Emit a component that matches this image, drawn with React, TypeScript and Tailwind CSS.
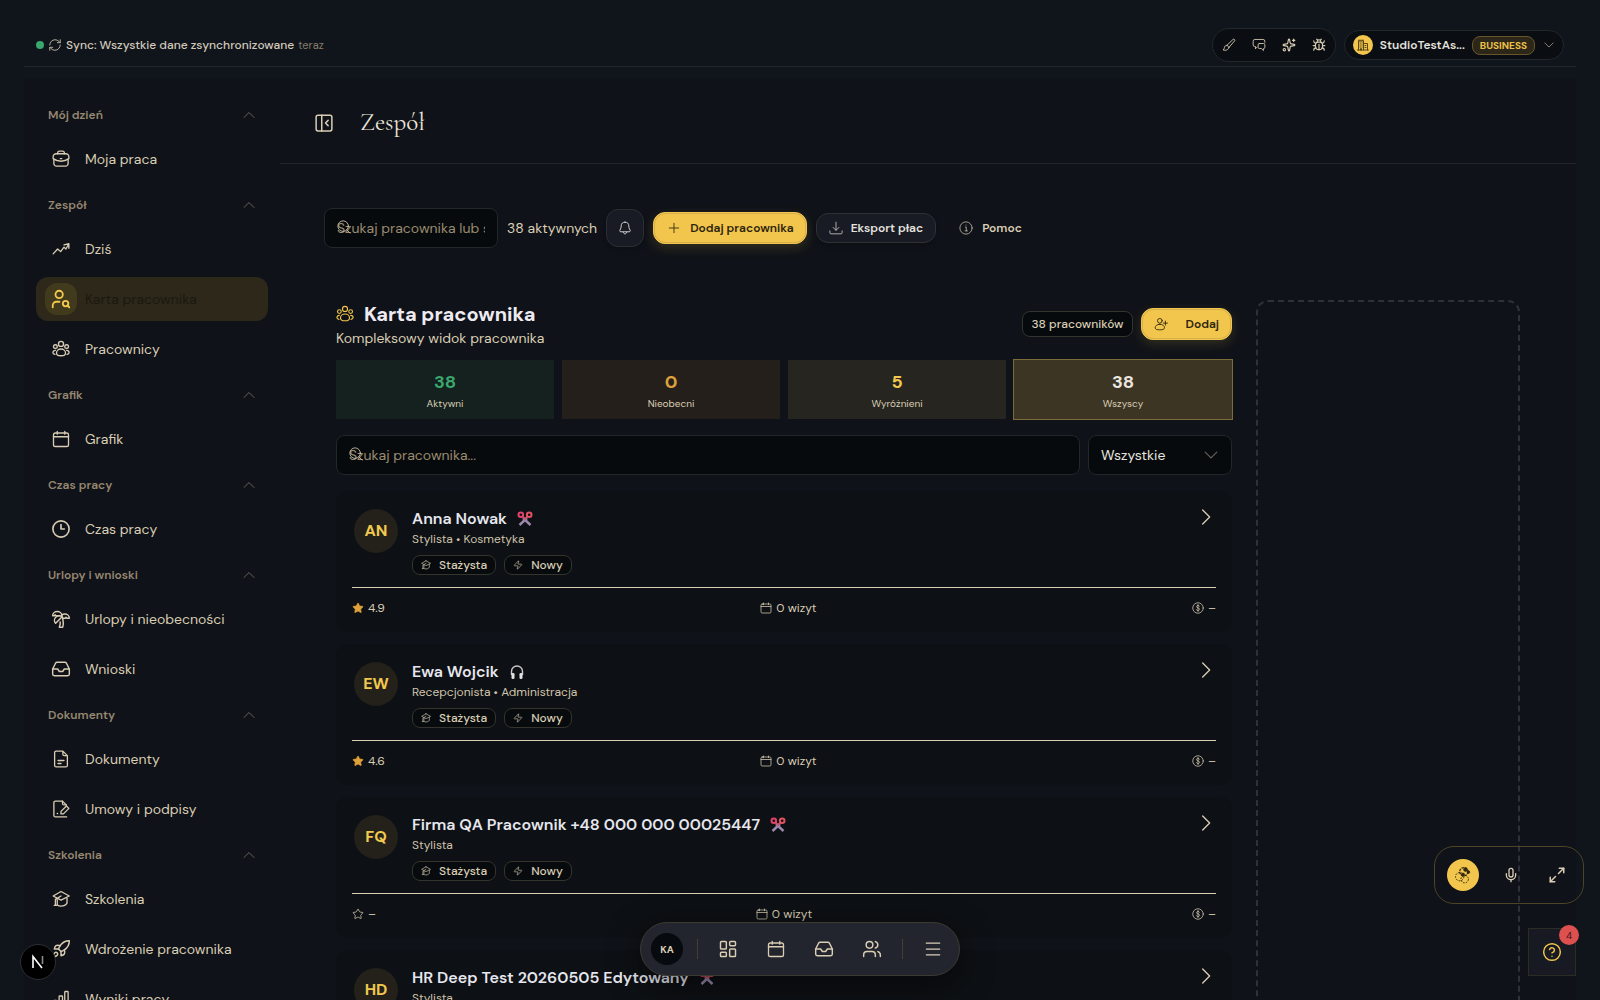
import type { ComponentType, ReactNode } from "react";
import {
  Bug,
  CircleQuestionMark,
  Inbox,
  LayoutDashboard,
  Maximize2,
  Menu,
  Mic,
  Plus,
  RefreshCw,
  Rocket,
  Sparkles,
  Star,
  TreePalm,
  UserSearch,
  Users,
  Zap,
} from "lucide-react";

type IconProps = { className?: string; strokeWidth?: number };
type Icon = ComponentType<IconProps>;

function makeIcon(children: ReactNode): Icon {
  return function LineIcon({ className, strokeWidth = 1.5 }: IconProps) {
    return (
      <svg
        viewBox="0 0 24 24"
        fill="none"
        stroke="currentColor"
        strokeWidth={strokeWidth}
        strokeLinecap="round"
        strokeLinejoin="round"
        className={className}
        aria-hidden="true"
      >
        {children}
      </svg>
    );
  };
}

const ChevronUpIcon = makeIcon(<path d="m2 17 10-10 10 10" />);
const ChevronDownIcon = makeIcon(<path d="m2 7 10 10L22 7" />);
const ChevronRightIcon = makeIcon(<path d="m7 1.500 10.500 10.500L7 22.500" />);

const BriefcaseIcon = makeIcon(
  <>
    <path d="M7.500 5V4A2.500 2.500 0 0 1 10 1.500h4A2.500 2.500 0 0 1 16.500 4v1" />
    <path d="M6 5h12a4 4 0 0 1 4.500 4v2.500c-3 2.300-6.500 3.500-10.500 3.500s-7.500-1.200-10.500-3.500V9A4 4 0 0 1 6 5Z" />
    <path d="M2.500 13v5A3.500 3.500 0 0 0 6 21.500h12a3.500 3.500 0 0 0 3.500-3.500v-5M11 11.500h2" />
  </>,
);

const TrendIcon = makeIcon(<path d="M1.500 18.500 7.500 12l4 3.500 4.500-6 2.500 2.500 3.500-6M16 6.500l6.500-1.500v6" />);

const GroupIcon = makeIcon(
  <>
    <circle cx="12" cy="5.200" r="3.400" />
    <circle cx="4.500" cy="8.800" r="2.500" />
    <circle cx="19.500" cy="8.800" r="2.500" />
    <path d="M12 12c-3.500 0-6 2.400-6 5.200C6 19.800 8.500 21 12 21s6-1.200 6-3.800C18 14.400 15.500 12 12 12Z" />
    <path d="M4.500 13.800c-1.800 0-3.300 1.300-3.300 3 0 1.400 1.200 2.200 2.800 2.400M19.500 13.800c1.800 0 3.300 1.300 3.300 3 0 1.400-1.200 2.200-2.800 2.400" />
  </>,
);

const CalendarIcon = makeIcon(
  <>
    <rect x="2" y="4" width="20" height="18" rx="2.500" />
    <path d="M2 9h20M7 2v3.500M17 2v3.500" />
  </>,
);

const ClockIcon = makeIcon(
  <>
    <circle cx="12" cy="12" r="10.800" strokeWidth="2.200" />
    <path d="M12 6v6h4.500" strokeWidth="2.200" />
  </>,
);

const DocumentIcon = makeIcon(
  <>
    <path d="M14.500 1.500H5.500a2 2 0 0 0-2 2v17a2 2 0 0 0 2 2h13a2 2 0 0 0 2-2V7.500l-6-6v4a2 2 0 0 0 2 2h4" />
    <path d="M8 14h8M8 18h4" />
  </>,
);

const SignatureIcon = makeIcon(
  <>
    <path d="M19 6.500 14 1.500H4.500a2 2 0 0 0-2 2v17a2 2 0 0 0 2 2h15" />
    <path d="M14 1.500v3a2 2 0 0 0 2 2h3M7 18h.5M12 18.500v-3.300L19.300 8l3.200 3.200-7.300 7.300H12Z" />
  </>,
);

const GraduationIcon = makeIcon(
  <path d="M12 2 23 8l-11 5.500L1.500 8 12 2ZM12 8l-7.500 4.500V20M20 10.500v7c-1.500 2.500-4.500 4-8 4-2 0-3.500-.5-5-1.500v-7M3 20.500h3" />,
);

const ChartIcon = makeIcon(
  <>
    <rect x="2" y="14" width="4.500" height="8" rx="1" />
    <rect x="9.500" y="8" width="4.500" height="14" rx="1" />
    <rect x="17" y="2" width="4.500" height="20" rx="1" />
  </>,
);

const BrushIcon = makeIcon(
  <path d="M8.500 12.500 18.800 2.600a1.800 1.800 0 0 1 2.600 2.600L12 16M8.500 12.500 12 16M8.500 12.500c-2.500 0-4 1.500-4.300 3.700-.2 1.800-.9 3-2.200 4.300 4 1.500 9.500 0 10-4.500" />,
);

const ChatIcon = makeIcon(
  <>
    <path d="M6 18v-3.500H4.500a2.500 2.500 0 0 1-2.500-2.500V5.500A3 3 0 0 1 5 2.500h14a3 3 0 0 1 3 3v2" />
    <path d="M12.500 9.500H20a2 2 0 0 1 2 2V16a2 2 0 0 1-2 2h-.5v3.500L16 18h-3.500a2 2 0 0 1-2-2v-4.500a2 2 0 0 1 2-2ZM6 18l2.500-2" />
  </>,
);

const BuildingIcon = makeIcon(
  <path d="M1 22h22M3 22V4h10v18M13 9h8v13M6 8h1M9.500 8h1M6 12h1M9.500 12h1M6 16h1M9.500 16h1M7 22v-3h2v3M16 13h2M16 17h2M3 2.500h10" />,
);

const PanelIcon = makeIcon(
  <>
    <rect x="1.500" y="1.500" width="21" height="21" rx="2.500" />
    <path d="M9 1.500v21M17.500 8.500 14 12l3.500 3.500" />
  </>,
);

const SearchIcon = makeIcon(
  <>
    <circle cx="10.500" cy="10.500" r="9" />
    <path d="m17 17 5.500 5.500" />
  </>,
);

const BellIcon = makeIcon(
  <path d="M12 2a6.500 6.500 0 0 0-6.500 6.500c0 5-2.500 6.500-2.500 8.200 0 1 .7 1.800 1.800 1.800h14.400c1.100 0 1.800-.8 1.800-1.800 0-1.700-2.500-3.200-2.500-8.200A6.500 6.500 0 0 0 12 2ZM9 19c.3 1.700 1.500 3 3 3s2.700-1.300 3-3" />,
);

const DownloadIcon = makeIcon(<path d="M12 2v13.500M7 11l5 5 5-5M1.500 17v3a2 2 0 0 0 2 2h17a2 2 0 0 0 2-2v-3" />);

const InfoIcon = makeIcon(
  <>
    <circle cx="12" cy="12" r="10.500" />
    <path d="M11 10.500h1.500v6M10.500 17h4M12 7v.3" />
  </>,
);

const UserPlusIcon = makeIcon(
  <>
    <circle cx="10" cy="6.500" r="4" />
    <path d="M10 12.500c-5 0-8 2.800-8 6C2 21 5 22 10 22s8-1 8-3.500c0-3.200-3-6-8-6ZM19.500 7v7M16 10.500h7" />
  </>,
);

const DollarIcon = makeIcon(
  <>
    <circle cx="12" cy="12" r="10.500" />
    <path d="M15 8.500c-.5-1-1.500-1.500-3-1.500-1.800 0-3 .8-3 2.300 0 3.400 6.200 1.700 6.200 5.200 0 1.600-1.300 2.500-3.200 2.500-1.700 0-2.800-.6-3.300-1.700M12 5v14" />
  </>,
);

// coloured glyphs shown beside the name, one per role
function ScissorsMark() {
  return (
    <svg viewBox="0 0 16 16" fill="none" className="size-4" aria-hidden="true">
      <path d="m6 7 7.500 7M10 7l-7.500 7" stroke="#9b88ac" strokeWidth="2.400" />
      <path d="m5.500 5.500 2.500 2.500 2.500-2.500" stroke="#c4546c" strokeWidth="1.800" />
      <circle cx="3.800" cy="3.800" r="2.300" stroke="#e0446c" strokeWidth="2" />
      <circle cx="12.200" cy="3.800" r="2.300" stroke="#e25360" strokeWidth="2" />
    </svg>
  );
}

function HeadphonesMark() {
  return (
    <svg viewBox="0 0 16 16" fill="none" className="size-4" aria-hidden="true">
      <path d="M2.500 11V7.500a5.500 5.500 0 0 1 11 0V11" stroke="#c9c9cb" strokeWidth="1.400" />
      <rect x="2.500" y="9" width="3" height="6" rx="1.300" fill="#e4e2e0" />
      <rect x="10.500" y="9" width="3" height="6" rx="1.300" fill="#e4e2e0" />
    </svg>
  );
}

type NavItem = { label: string; icon: Icon; size?: string; active?: boolean };

const navGroups: { title: string; items: NavItem[] }[] = [
  { title: "Mój dzień", items: [{ label: "Moja praca", icon: BriefcaseIcon }] },
  {
    title: "Zespół",
    items: [
      { label: "Dziś", icon: TrendIcon },
      { label: "Karta pracownika", icon: UserSearch, size: "size-[22px]", active: true },
      { label: "Pracownicy", icon: GroupIcon },
    ],
  },
  { title: "Grafik", items: [{ label: "Grafik", icon: CalendarIcon }] },
  { title: "Czas pracy", items: [{ label: "Czas pracy", icon: ClockIcon }] },
  {
    title: "Urlopy i wnioski",
    items: [
      { label: "Urlopy i nieobecności", icon: TreePalm, size: "size-5" },
      { label: "Wnioski", icon: Inbox, size: "size-5" },
    ],
  },
  {
    title: "Dokumenty",
    items: [
      { label: "Dokumenty", icon: DocumentIcon },
      { label: "Umowy i podpisy", icon: SignatureIcon },
    ],
  },
  {
    title: "Szkolenia",
    items: [
      { label: "Szkolenia", icon: GraduationIcon },
      { label: "Wdrożenie pracownika", icon: Rocket, size: "size-5" },
      { label: "Wyniki pracy", icon: ChartIcon },
    ],
  },
];

const stats = [
  { value: "38", label: "Aktywni", box: "bg-[#14211f]", text: "text-[#3aa76d]" },
  { value: "0", label: "Nieobecni", box: "bg-[#241f1b]", text: "text-[#e0a13a]" },
  { value: "5", label: "Wyróżnieni", box: "bg-[#26251f]", text: "text-[#f2c84f]" },
  { value: "38", label: "Wszyscy", box: "bg-[#3d3524] ring-1 ring-[#7d6c38]", text: "text-[#ece8e0]" },
];

const employees = [
  { initials: "AN", name: "Anna Nowak", role: "Stylista • Kosmetyka", rating: "4.9", mark: "scissors" },
  { initials: "EW", name: "Ewa Wojcik", role: "Recepcjonista • Administracja", rating: "4.6", mark: "headphones" },
  { initials: "FQ", name: "Firma QA Pracownik +48 000 000 00025447", role: "Stylista", rating: null, mark: "scissors" },
  { initials: "HD", name: "HR Deep Test 20260505 Edytowany", role: "Stylista", rating: null, mark: "scissors" },
];

function TopBar() {
  return (
    <header className="flex h-[43px] shrink-0 items-center justify-between border-b border-[#22262b] px-3">
      <div className="flex items-center text-xs">
        <span className="size-2 rounded-full bg-[#3aa76d]" />
        <RefreshCw className="ml-1 size-[14px] text-[#c9c0ac]" strokeWidth={1.5} />
        <span className="ml-1 font-medium text-[#d0c9ba]">Sync: Wszystkie dane zsynchronizowane</span>
        <span className="ml-1 text-[11px] text-[#857b6b]">teraz</span>
      </div>
      <div className="flex items-center gap-2">
        <div className="flex h-[34px] items-center gap-[2px] rounded-full border border-[#22272a] bg-[#0a0d11] px-[2px] text-[#d9cdb4]">
          {[
            { label: "Motyw", icon: BrushIcon },
            { label: "Wiadomości", icon: ChatIcon },
            { label: "Nowości", icon: Sparkles },
            { label: "Zgłoś błąd", icon: Bug },
          ].map(({ label, icon: ItemIcon }) => (
            <button key={label} type="button" aria-label={label} className="flex size-7 items-center justify-center">
              <ItemIcon className="size-[14px]" />
            </button>
          ))}
        </div>
        <button
          type="button"
          className="flex h-[30px] items-center gap-[7px] rounded-full border border-[#22272a] bg-[#0a0d11] pr-[9px] pl-2"
        >
          <span className="flex size-5 items-center justify-center rounded-full bg-[#f2c54c] text-[#5a4614]">
            <BuildingIcon className="size-3" strokeWidth={2} />
          </span>
          <span className="text-xs font-semibold text-[#e4e2de]">StudioTestAs...</span>
          <span className="rounded-lg border border-[#65562c] bg-[#2c2718] px-[7px] text-[10px] leading-[17px] font-bold text-[#ecc04a]">
            BUSINESS
          </span>
          <ChevronDownIcon className="ml-[2px] size-[10px] text-[#9c978c]" strokeWidth={2} />
        </button>
      </div>
    </header>
  );
}

function Sidebar() {
  return (
    <aside className="w-64 shrink-0 overflow-hidden px-3 pt-[18px]">
      <nav>
        {navGroups.map((group) => (
          <section key={group.title}>
            <button
              type="button"
              className="mb-1 flex h-9 w-full items-center justify-between px-3 text-xs font-semibold text-[#968770]"
            >
              {group.title}
              <ChevronUpIcon className="mr-px size-3 text-[#66625a]" strokeWidth={2} />
            </button>
            {group.items.map(({ label, icon: ItemIcon, size, active }) => (
              <a
                key={label}
                href="#"
                className={`mb-[6px] flex h-11 items-center gap-2 rounded-xl px-[9px] text-sm ${
                  active ? "bg-[#2d281a] text-[#1b190f]" : "text-[#d9cdb4]"
                }`}
              >
                <span
                  className={`flex size-8 items-center justify-center rounded-xl ${
                    active ? "bg-[#413a1c] text-[#f2c84f]" : ""
                  }`}
                >
                  <ItemIcon className={size ?? "size-[18px]"} strokeWidth={active ? 2 : 1.75} />
                </span>
                {label}
              </a>
            ))}
          </section>
        ))}
      </nav>
    </aside>
  );
}

function Toolbar() {
  return (
    <div className="flex h-10 items-center gap-[9px] text-sm">
      <label className="relative block">
        <span className="sr-only">Szukaj</span>
        <SearchIcon className="absolute top-3 left-[13px] size-[14px] text-[#cfc5b0]" />
        <input
          type="text"
          placeholder="Szukaj pracownika lub stanowiska"
          className="h-10 w-[174px] rounded-lg border border-[#22272a] bg-[#070a0d] px-3 text-sm placeholder:text-[#9a8b70]"
        />
      </label>
      <span className="text-[#d9cdb4]">38 aktywnych</span>
      <button
        type="button"
        aria-label="Powiadomienia"
        className="flex size-[38px] items-center justify-center rounded-xl border border-[#2b2f33] bg-[#191b24] text-[#e4e2de] shadow-md"
      >
        <BellIcon className="size-[14px]" />
      </button>
      <button
        type="button"
        className="flex h-8 items-center gap-2 rounded-xl border border-[#f2c54c] bg-[#f2c54c] px-3 text-xs font-semibold text-[#2c240c] shadow-[inset_0_0_0_1px_#d6b04a,0_4px_12px_rgba(242,197,76,0.16)]"
      >
        <Plus className="size-4" strokeWidth={1.25} />
        Dodaj pracownika
      </button>
      <button
        type="button"
        className="flex h-[30px] items-center gap-2 rounded-xl border border-[#2e3233] bg-[#191b24] px-3 text-xs font-semibold text-[#e4e2de] shadow-md"
      >
        <DownloadIcon className="size-[14px]" strokeWidth={1.25} />
        Eksport płac
      </button>
      <button type="button" className="ml-[14px] flex items-center gap-[9px] text-xs font-semibold text-[#d9cdb4]">
        <InfoIcon className="size-[14px]" strokeWidth={1.25} />
        Pomoc
      </button>
    </div>
  );
}

function EmployeeCard({ employee }: { employee: (typeof employees)[number] }) {
  return (
    <article className="rounded-xl bg-[#0d1014] p-4">
      <div className="flex items-start">
        <span className="m-[2px] flex size-11 shrink-0 items-center justify-center rounded-full bg-[#23211a] text-base font-bold text-[#f2c84f]">
          {employee.initials}
        </span>
        <div className="ml-3 flex-1">
          <div className="flex h-6 items-center gap-[10px]">
            <h3 className="text-base font-semibold text-[#e6e7ee]">{employee.name}</h3>
            {employee.mark === "scissors" ? <ScissorsMark /> : <HeadphonesMark />}
          </div>
          <p className="text-xs text-[#cfc4ab]">{employee.role}</p>
          <div className="mt-2 flex gap-2 text-xs font-medium text-[#d9cdb4]">
            <span className="flex h-5 items-center gap-2 rounded-lg border border-[#33352c] bg-[#080b0e] px-2">
              <GraduationIcon className="size-[10px]" />
              Stażysta
            </span>
            <span className="flex h-5 items-center gap-2 rounded-lg border border-[#33352c] bg-[#080b0e] px-2">
              <Zap className="size-[10px]" strokeWidth={1.5} />
              Nowy
            </span>
          </div>
        </div>
        <ChevronRightIcon className="mt-[2px] mr-[2px] size-4 text-[#d9cdb4]" strokeWidth={2} />
      </div>
      <div className="mt-3 flex items-center justify-between border-t border-[#d9cdb4] pt-3 text-xs text-[#d9cdb4]">
        <span className="flex items-center gap-1">
          <Star
            className={employee.rating ? "size-3 fill-[#e0a13a] text-[#e0a13a]" : "size-3"}
            strokeWidth={1.5}
          />
          {employee.rating ?? "–"}
        </span>
        <span className="flex items-center gap-1">
          <CalendarIcon className="size-3" />0 wizyt
        </span>
        <span className="flex items-center gap-1">
          <DollarIcon className="size-3" />–
        </span>
      </div>
    </article>
  );
}

function EmployeePanel() {
  return (
    <section className="min-w-0 flex-1">
      <div className="flex items-center justify-between">
        <div>
          <h2 className="flex h-7 items-center gap-[10px] text-xl font-bold text-[#eeecf2]">
            <GroupIcon className="size-[18px] text-[#f2c54c]" />
            Karta pracownika
          </h2>
          <p className="text-sm text-[#d9cdb4]">Kompleksowy widok pracownika</p>
        </div>
        <div className="flex items-center gap-2">
          <span className="flex h-[26px] items-center rounded-lg border border-[#33352c] bg-[#070a0d] px-2 text-xs font-medium text-[#d9cdb4]">
            38 pracowników
          </span>
          <button
            type="button"
            className="flex h-8 items-center gap-[18px] rounded-xl border border-[#f2c54c] bg-[#f2c54c] px-3 text-xs font-semibold text-[#2c240c] shadow-[inset_0_0_0_1px_#d6b04a,0_4px_12px_rgba(242,197,76,0.16)]"
          >
            <UserPlusIcon className="size-[14px]" />
            Dodaj
          </button>
        </div>
      </div>

      <div className="mt-3 grid grid-cols-4 gap-2">
        {stats.map((stat) => (
          <button key={stat.label} type="button" className={`flex h-[59px] flex-col items-center pt-2 ${stat.box}`}>
            <span className={`text-lg leading-7 font-bold ${stat.text}`}>{stat.value}</span>
            <span className="text-[10px] leading-4 text-[#d9cdb4]">{stat.label}</span>
          </button>
        ))}
      </div>

      <div className="mt-4 flex gap-2">
        <label className="relative block flex-1">
          <span className="sr-only">Szukaj pracownika</span>
          <SearchIcon className="absolute top-3 left-[13px] size-[14px] text-[#cfc5b0]" />
          <input
            type="text"
            placeholder="Szukaj pracownika..."
            className="h-10 w-full rounded-lg border border-[#22272a] bg-[#070a0d] px-3 text-sm placeholder:text-[#9a8b70]"
          />
        </label>
        <label className="relative block w-36">
          <span className="sr-only">Status</span>
          <select className="h-10 w-full appearance-none rounded-lg border border-[#22272a] bg-[#070a0d] px-3 text-sm text-[#e6e4df]">
            <option>Wszystkie</option>
          </select>
          <ChevronDownIcon className="absolute top-[13px] right-[14px] size-[14px] text-[#66625a]" strokeWidth={2} />
        </label>
      </div>

      <div className="mt-4 flex flex-col gap-3">
        {employees.map((employee) => (
          <EmployeeCard key={employee.initials} employee={employee} />
        ))}
      </div>
    </section>
  );
}

function Dock() {
  return (
    <nav
      aria-label="Skróty"
      className="fixed bottom-6 left-1/2 flex h-[54px] -translate-x-1/2 items-center rounded-full border border-[#3b3a30] bg-[#23252e] pr-2 pl-[10px] text-[#d9cdb4] shadow-[0_8px_32px_rgba(0,0,0,0.5)]"
    >
      <span className="flex size-8 items-center justify-center rounded-full bg-[#070a0f] text-[10px] font-bold">KA</span>
      <span className="mr-3 ml-[14px] h-5 w-px bg-[#413f33]" />
      <div className="flex gap-3">
        {[
          { label: "Pulpit", icon: LayoutDashboard },
          { label: "Kalendarz", icon: CalendarIcon },
          { label: "Skrzynka", icon: Inbox },
          { label: "Klienci", icon: Users },
        ].map(({ label, icon: ItemIcon }) => (
          <a key={label} href="#" aria-label={label} className="flex size-9 items-center justify-center">
            <ItemIcon className={label === "Kalendarz" ? "size-[18px]" : "size-5"} strokeWidth={1.75} />
          </a>
        ))}
      </div>
      <span className="mx-3 h-5 w-px bg-[#413f33]" />
      <button type="button" aria-label="Menu" className="flex size-9 items-center justify-center">
        <Menu className="size-5" strokeWidth={1.5} />
      </button>
    </nav>
  );
}

function Assistant() {
  return (
    <div className="fixed right-4 bottom-24 flex h-[58px] w-[150px] items-center rounded-[20px] border border-[#4c4526] pl-3 text-[#d9cdb4]">
      <button
        type="button"
        aria-label="Asystent"
        className="flex size-8 items-center justify-center rounded-full bg-[#f2c54c] text-[#33290f]"
      >
        <svg viewBox="0 0 24 24" className="size-5" fill="none" stroke="currentColor" aria-hidden="true">
          <circle cx="8" cy="14" r="5" strokeWidth="1.200" strokeDasharray="2 1.500" />
          <circle cx="14" cy="17" r="4.500" strokeWidth="1.200" strokeDasharray="2 1.500" />
          <circle cx="13" cy="8" r="5" strokeWidth="1.500" strokeDasharray="3 1" />
          <circle cx="15" cy="5.500" r="2.200" fill="currentColor" />
          <circle cx="18.500" cy="8.500" r="1.600" fill="currentColor" />
          <circle cx="12" cy="11.500" r="1.800" fill="currentColor" />
        </svg>
      </button>
      <button type="button" aria-label="Mikrofon" className="ml-5 flex size-6 items-center justify-center">
        <Mic className="size-4" strokeWidth={2} />
      </button>
      <button type="button" aria-label="Powiększ" className="ml-[22px] flex size-6 items-center justify-center">
        <Maximize2 className="size-[18px]" strokeWidth={2} />
      </button>
    </div>
  );
}

export default function App() {
  return (
    <div className="flex h-screen flex-col overflow-hidden bg-[#10141b] px-6 pt-6 font-['DM_Sans',Inter,sans-serif] antialiased">
      <TopBar />
      <div className="mt-3 flex min-h-0 flex-1 bg-[#0f1218]">
        <Sidebar />
        <main className="min-w-0 flex-1 overflow-hidden">
          <div className="flex h-[85px] items-center gap-[27px] border-b border-[#22262b] pt-1 pl-[35px] text-[#d9cdb4]">
            <button type="button" aria-label="Zwiń panel">
              <PanelIcon className="size-[18px]" strokeWidth={2} />
            </button>
            <h1 className="font-['Cormorant_Garamond','Liberation_Serif',serif] text-[25px] text-[#ece6da]">Zespół</h1>
          </div>
          <div className="px-11 pt-11">
            <Toolbar />
            <div className="mt-[52px] flex items-stretch gap-6 px-3">
              <EmployeePanel />
              <div className="w-66 shrink-0 rounded-xl border-2 border-dashed border-[#2e3137]" />
            </div>
          </div>
        </main>
      </div>

      <Dock />
      <Assistant />
      <button
        type="button"
        aria-label="Pomoc"
        className="fixed right-6 bottom-6 flex size-12 items-center justify-center border border-[#2b2c26] bg-[#171a23] text-[#f2c54c]"
      >
        <CircleQuestionMark className="size-5" strokeWidth={1.75} />
        <span className="absolute -top-1 -right-1 flex size-5 items-center justify-center rounded-full bg-[#dd5050] text-[10px] text-[#3a1214]">
          4
        </span>
      </button>
      <button
        type="button"
        aria-label="Next.js"
        className="fixed bottom-5 left-5 flex size-9 items-center justify-center rounded-full border border-[#2e3033] bg-black"
      >
        <svg viewBox="0 0 16 16" className="size-4" fill="none" stroke="#fff" strokeWidth="1.600" aria-hidden="true">
          <path d="M3 14V2.500L12 14" />
          <path d="M12.500 2v8" stroke="#8a8a8a" />
        </svg>
      </button>
    </div>
  );
}
